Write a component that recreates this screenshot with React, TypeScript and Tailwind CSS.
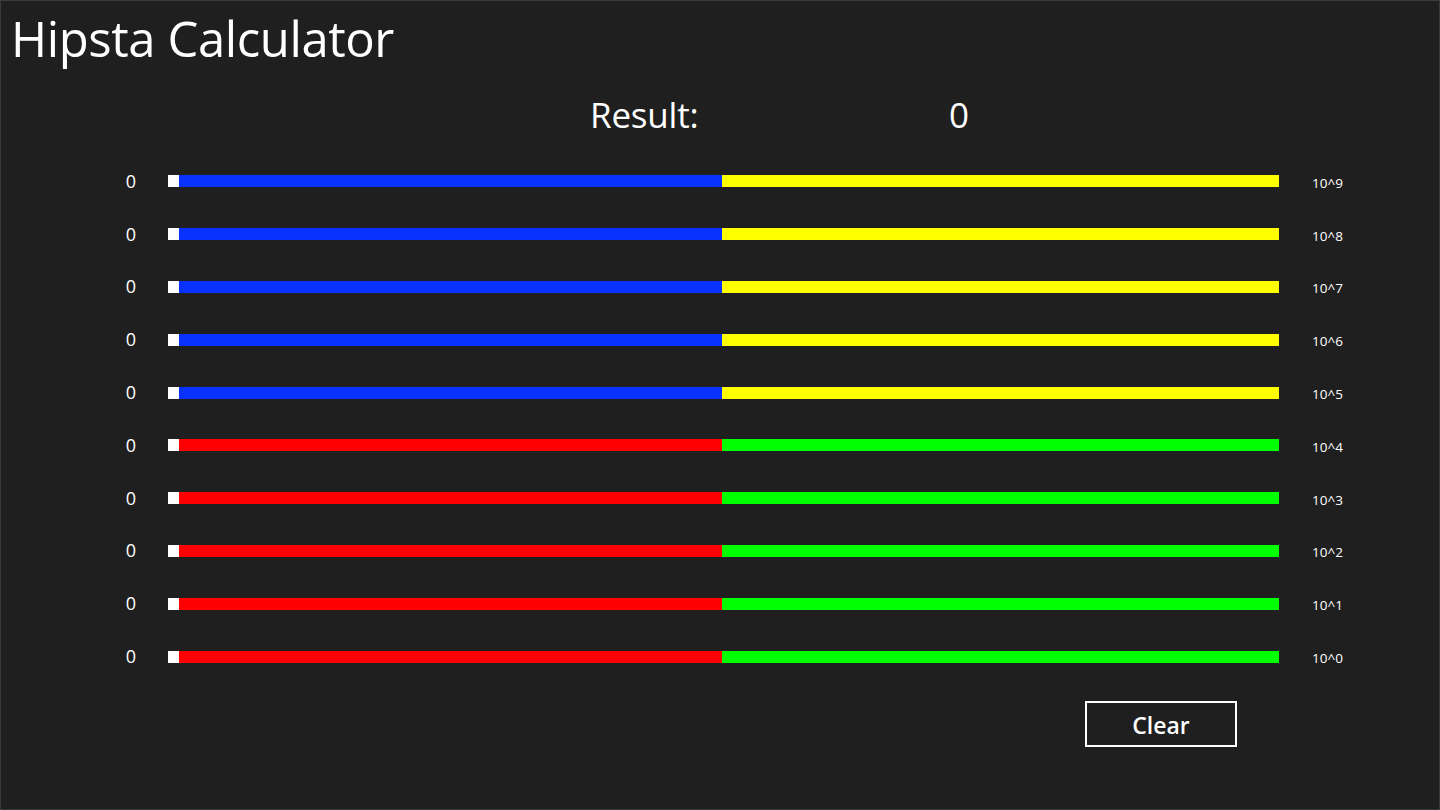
import { useState } from "react";

const rows = [
  { exp: 9, left: "bg-[#0a32ff]", right: "bg-[#ffff00]" },
  { exp: 8, left: "bg-[#0a32ff]", right: "bg-[#ffff00]" },
  { exp: 7, left: "bg-[#0a32ff]", right: "bg-[#ffff00]" },
  { exp: 6, left: "bg-[#0a32ff]", right: "bg-[#ffff00]" },
  { exp: 5, left: "bg-[#0a32ff]", right: "bg-[#ffff00]" },
  { exp: 4, left: "bg-[#ff0000]", right: "bg-[#00ff00]" },
  { exp: 3, left: "bg-[#ff0000]", right: "bg-[#00ff00]" },
  { exp: 2, left: "bg-[#ff0000]", right: "bg-[#00ff00]" },
  { exp: 1, left: "bg-[#ff0000]", right: "bg-[#00ff00]" },
  { exp: 0, left: "bg-[#ff0000]", right: "bg-[#00ff00]" },
];

export default function App() {
  const [values, setValues] = useState<number[]>(rows.map(() => 0));

  const result = values.reduce(
    (sum, v, i) => sum + v * Math.pow(10, rows[i].exp),
    0
  );

  return (
    <div
      className="w-[1440px] h-[810px] bg-[#1f1f1f] text-white border border-[#3a3a3a] flex flex-col overflow-hidden"
      style={{ fontFamily: '"Open Sans", "Noto Sans", sans-serif' }}>
      <h1 className="pl-[10px] pt-[6px] h-[72px] text-[49px] leading-[62px] font-normal tracking-[-0.4px]">
        Hipsta Calculator
      </h1>

      <div className="flex items-center h-[80px] pt-[4px] pl-[589px]">
        <span className="w-[359px] text-[35px] font-normal tracking-[-0.2px]">
          Result:
        </span>
        <span className="text-[35px] font-normal">{result}</span>
      </div>

      <div className="flex flex-col pt-[2px]">
        {rows.map((row, i) => (
          <div key={row.exp} className="flex items-center h-[52.8px]">
            <span className="w-[135px] text-right text-[18px] font-normal text-white">
              {values[i]}
            </span>
            <div className="ml-[32px] flex items-center">
              <button
                onClick={() =>
                  setValues((v) => v.map((x, j) => (j === i ? 0 : x)))
                }
                className="w-[11px] h-[12px] bg-white"
              />
              <div className={`w-[543px] h-[12px] ${row.left}`} />
              <div className={`w-[557px] h-[12px] ${row.right}`} />
            </div>
            <span className="ml-[33px] text-[13.5px] pt-[3px] text-white">
              10^{row.exp}
            </span>
          </div>
        ))}
      </div>

      <div className="flex pl-[1084px] pt-[18px]">
        <button
          onClick={() => setValues(rows.map(() => 0))}
          className="w-[152px] h-[46px] border-2 border-white text-[23px] font-semibold pt-[3px]">
          Clear
        </button>
      </div>
    </div>
  );
}
